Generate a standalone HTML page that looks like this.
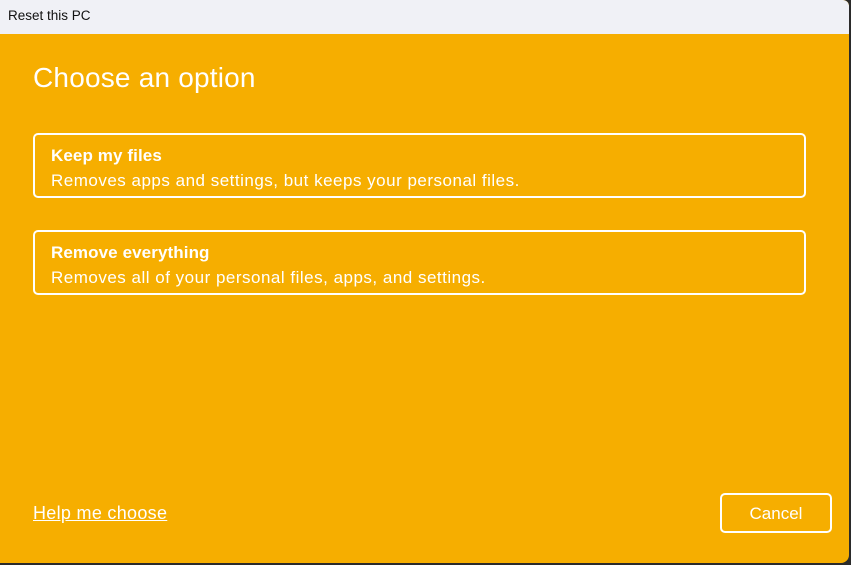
<!DOCTYPE html>
<html><head><style>
body{margin:0;width:851px;height:565px;background:#2b2b2b;overflow:hidden;font-family:"Segoe UI","Liberation Sans",sans-serif;}
.win{position:absolute;left:0;top:0;width:849px;height:563px;background:#f6ae00;border-radius:0 6px 8px 0;overflow:hidden;}
.tb{position:absolute;left:0;top:0;width:849px;height:34px;background:#f0f1f6;border-radius:0 6px 0 0;}
.tb span{position:absolute;left:8px;top:8px;font-size:13.5px;color:#111;}
h1{position:absolute;left:33px;top:62px;margin:0;font-weight:300;font-size:28px;letter-spacing:0.2px;color:#fff;}
.opt{position:absolute;left:33px;width:769px;height:61px;border:2.5px solid #fff;border-radius:5px;color:#fff;}
.opt b{position:absolute;left:16px;top:11px;font-size:17px;letter-spacing:0.1px;}
.opt span{position:absolute;left:16px;top:36px;font-size:17px;letter-spacing:0.5px;white-space:nowrap;}
.help{position:absolute;left:33px;top:503px;color:#fff;font-size:18px;letter-spacing:0.3px;text-decoration:underline;}
.cancel{position:absolute;left:720px;top:493px;width:108px;height:36px;border:2.5px solid #fff;border-radius:5px;color:#fff;font-size:17px;text-align:center;line-height:37px;}
</style></head><body>
<div class="win">
<div class="tb"><span>Reset this PC</span></div>
<h1>Choose an option</h1>
<div class="opt" style="top:133px"><b>Keep my files</b><span>Removes apps and settings, but keeps your personal files.</span></div>
<div class="opt" style="top:230px"><b>Remove everything</b><span>Removes all of your personal files, apps, and settings.</span></div>
<div class="help">Help me choose</div>
<div class="cancel">Cancel</div>
</div>
</body></html>
